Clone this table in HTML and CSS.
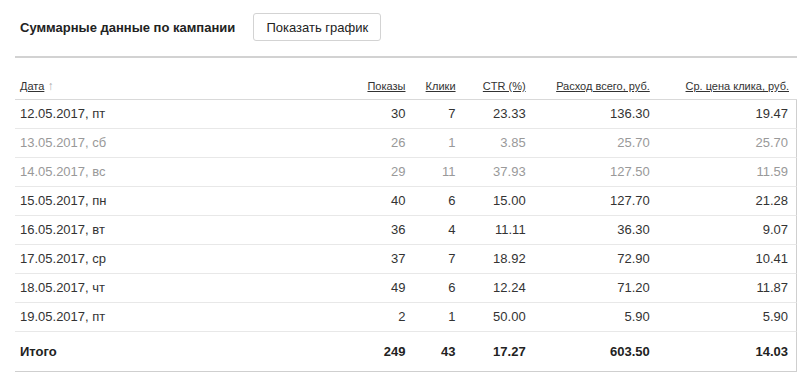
FILE: index.html
```html
<!DOCTYPE html>
<html lang="ru">
<head>
<meta charset="utf-8">
<link rel="stylesheet" href="styles.css">
</head>
<body>
<div class="page">
  <div class="head">
    <h2 class="title">Суммарные данные по кампании</h2>
    <button class="btn">Показать график</button>
  </div>
  <div class="rule"></div>
  <table class="stats">
    <thead>
      <tr>
        <th class="c-date"><a href="#">Дата</a> <span class="arrow">↑</span></th>
        <th class="c-shows"><a href="#">Показы</a></th>
        <th class="c-clicks"><a href="#">Клики</a></th>
        <th class="c-ctr"><a href="#">CTR (%)</a></th>
        <th class="c-spend"><a href="#">Расход всего, руб.</a></th>
        <th class="c-avg"><a href="#">Ср. цена клика, руб.</a></th>
      </tr>
    </thead>
    <tbody>
      <tr><td>12.05.2017, пт</td><td>30</td><td>7</td><td>23.33</td><td>136.30</td><td>19.47</td></tr>
      <tr class="muted"><td>13.05.2017, сб</td><td>26</td><td>1</td><td>3.85</td><td>25.70</td><td>25.70</td></tr>
      <tr class="muted"><td>14.05.2017, вс</td><td>29</td><td>11</td><td>37.93</td><td>127.50</td><td>11.59</td></tr>
      <tr><td>15.05.2017, пн</td><td>40</td><td>6</td><td>15.00</td><td>127.70</td><td>21.28</td></tr>
      <tr><td>16.05.2017, вт</td><td>36</td><td>4</td><td>11.11</td><td>36.30</td><td>9.07</td></tr>
      <tr><td>17.05.2017, ср</td><td>37</td><td>7</td><td>18.92</td><td>72.90</td><td>10.41</td></tr>
      <tr><td>18.05.2017, чт</td><td>49</td><td>6</td><td>12.24</td><td>71.20</td><td>11.87</td></tr>
      <tr><td>19.05.2017, пт</td><td>2</td><td>1</td><td>50.00</td><td>5.90</td><td>5.90</td></tr>
    </tbody>
    <tfoot>
      <tr><td>Итого</td><td>249</td><td>43</td><td>17.27</td><td>603.50</td><td>14.03</td></tr>
    </tfoot>
  </table>
</div>
</body>
</html>
```

FILE: styles.css
```css
html, body {
  margin: 0;
  padding: 0;
  background: #fff;
}
body {
  font-family: "Liberation Sans", Arial, sans-serif;
  color: #333;
}
.page {
  padding-left: 15px;
}
.head {
  display: flex;
  align-items: center;
  padding: 13px 0 0 5px;
  height: 28px;
  margin-bottom: 15px;
}
.title {
  margin: 0;
  font-size: 13px;
  font-weight: bold;
  color: #222;
}
.btn {
  margin-left: 18px;
  box-sizing: border-box;
  width: 128px;
  height: 28px;
  background: #fff;
  border: 1px solid #d3d3d3;
  border-radius: 3px;
  font-family: "Liberation Sans", Arial, sans-serif;
  font-size: 13px;
  color: #222;
  padding: 0;
}
.rule {
  height: 2px;
  background: #d2d2d2;
}
.stats {
  table-layout: fixed;
  width: 782px;
  border-collapse: separate;
  border-spacing: 0;
  font-size: 13px;
}
.stats th, .stats td {
  box-sizing: border-box;
  padding: 0;
  text-align: right;
  white-space: nowrap;
}
.stats th {
  font-size: 11px;
  font-weight: normal;
  line-height: 13px;
  height: 42px;
  padding-top: 22px;
  padding-bottom: 6px;
  vertical-align: top;
  border-bottom: 1px solid #d9d9d9;
}
.stats th a {
  color: #333;
  text-decoration: underline;
}
.arrow {
  color: #aaa;
  font-size: 12px;
}
.stats .c-date { width: 330px; }
.stats .c-shows { width: 60px; }
.stats .c-clicks { width: 50px; }
.stats .c-ctr { width: 70px; }
.stats .c-spend { width: 124px; }
.stats .c-avg { width: 147px; padding-right: 8px; }
.stats th:first-child, .stats td:first-child {
  text-align: left;
  padding-left: 5px;
}
.stats td {
  height: 29px;
  line-height: 16px;
  vertical-align: middle;
  border-bottom: 1px solid #e8e8e8;
}
.stats td:last-child {
  padding-right: 8px;
  border-right: 1px solid #cfcfcf;
}
.stats tr.muted td {
  color: #999;
}
.stats tfoot td {
  height: 40px;
  font-weight: bold;
  color: #222;
  border-bottom: 1px solid #cfcfcf;
}
```
